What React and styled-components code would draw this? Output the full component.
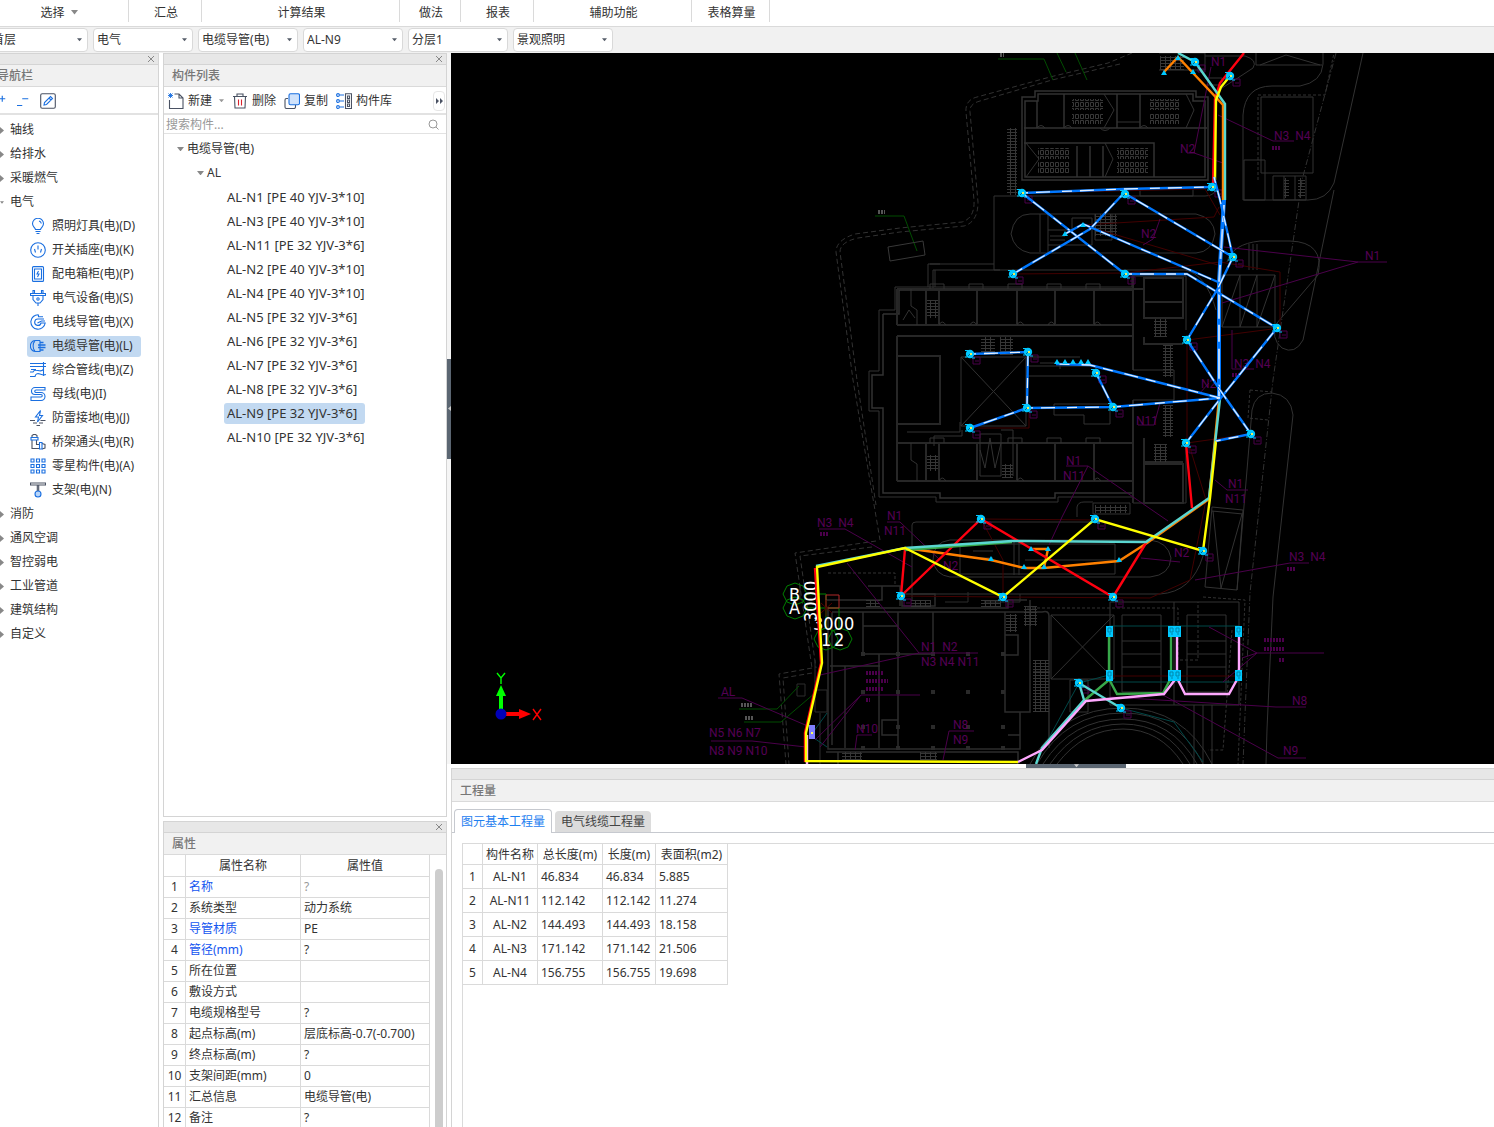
import { useState } from "react";
import styled, { createGlobalStyle, css } from "styled-components";

const GlobalStyle = createGlobalStyle`
  * {
    box-sizing: border-box;
  }

  body {
    margin: 0;
    background: #fff;
    overflow: hidden;
  }

  body, button, input, select, table {
    font-family: "Noto Sans", "Noto Sans CJK SC", sans-serif;
    font-size: 12px;
    line-height: 16px;
    color: #333;
  }

  button {
    background: none;
    border: none;
    padding: 0;
    cursor: pointer;
  }

  svg {
    display: block;
    flex: none;
  }
`;

/* The window is scrolled a little to the right of its left edge */
const Janela = styled.div`
  display: flex;
  flex-direction: column;
  height: 100vh;
  margin-left: -12px;
`;

const Menu = styled.nav`
  display: flex;
  height: 27px;
  padding-bottom: 4px;
  border-bottom: 1px solid #dadada;
`;

const MenuBotao = styled.button`
  display: flex;
  align-items: center;
  justify-content: center;
  gap: 6px;
  width: ${({ $largura }) => $largura}px;
  padding: 3px 0 0 2px;
  border-right: 1px solid #dadada;
`;

const Filtros = styled.div`
  display: flex;
  gap: 5px;
  padding: 1px 0;
  height: 26px;
  background: #f1f1f1;
`;

const Filtro = styled.label`
  position: relative;
  width: 100px;

  svg {
    position: absolute;
    right: 6px;
    top: 10px;
    pointer-events: none;
  }
`;

const Selecao = styled.select`
  appearance: none;
  width: 100%;
  height: 24px;
  padding: 0 14px 0 3px;
  background: #fff;
  border: 1px solid #d9d9d9;
  border-radius: 4px;
`;

const Corpo = styled.main`
  display: grid;
  grid-template-columns: 171px 284px minmax(0, 1fr);
  column-gap: 4px;
  flex: 1;
  min-height: 0;
`;

const Coluna = styled.div`
  display: flex;
  flex-direction: column;
  gap: 4px;
  min-height: 0;
`;

const Painel = styled.section`
  display: flex;
  flex-direction: column;
  flex: ${({ $altura }) => ($altura ? `0 0 ${$altura}px` : "1")};
  min-height: 0;
  min-width: 0;
  overflow: hidden;
  border: 1px solid #d4d4d4;
  border-bottom-width: ${({ $aberto }) => ($aberto ? 0 : 1)}px;
  border-right-width: ${({ $semDireita }) => ($semDireita ? 0 : 1)}px;
`;

const Alca = styled.div`
  display: flex;
  justify-content: flex-end;
  flex: none;
  height: 11px;
  padding-right: 3px;
  background: #e7e7e7;
  border-bottom: 1px solid #d4d4d4;

  button {
    display: flex;
    align-items: center;
  }
`;

const Titulo = styled.h2`
  flex: none;
  height: 22px;
  margin: 0;
  padding: 3px 8px;
  font-size: 12px;
  font-weight: 500;
  color: #777;
  background: #f1f1f1;
  border-bottom: 1px solid #dadada;
`;

const Barra = styled.div`
  display: flex;
  align-items: center;
  flex: none;
  gap: ${({ $espaco }) => $espaco}px;
  height: 28px;
  padding: 1px 0 0 ${({ $recuo }) => $recuo}px;
  border-bottom: 2px solid #e2e2e2;
`;

const BotaoBarra = styled.button`
  display: flex;
  align-items: center;
  gap: 4px;
  white-space: nowrap;

  svg:last-child:not(:first-child) {
    margin-left: 3px;
  }
`;

const BotaoMais = styled.button`
  display: flex;
  align-items: center;
  justify-content: center;
  width: 12px;
  height: 20px;
  margin-left: auto;
  margin-right: 1px;
  border: 1px solid #e6e6e6;
  border-radius: 4px;
`;

const Busca = styled.label`
  display: flex;
  align-items: center;
  flex: none;
  height: 19px;
  padding: 1px 7px 0 2px;
  border-bottom: 1px solid #e2e2e2;

  input {
    flex: 1;
    min-width: 0;
    padding: 0;
    border: none;
    outline: none;
  }

  input::placeholder {
    color: #999;
  }
`;

const Lista = styled.ul`
  list-style: none;
  margin: 0;
  padding: ${({ $topo = 0 }) => $topo}px 0 0;
`;

const Linha = styled.li`
  display: flex;
  align-items: center;
  height: 24px;
  padding-left: ${({ $recuo }) => $recuo}px;
`;

const LinhaBotao = styled.button`
  display: flex;
  align-items: center;
  gap: ${({ $espaco = 6 }) => $espaco}px;
  height: 21px;
  padding: 0 ${({ $direita = 3 }) => $direita}px 0 3px;
  border-radius: 3px;
  white-space: nowrap;

  ${({ $ativo }) =>
    $ativo &&
    css`
      background: #c2d9f1;
    `}
`;

const ComponenteBotao = styled(LinhaBotao)`
  font-size: 13px;
`;

const AreaPropriedades = styled.div`
  display: flex;
  justify-content: space-between;
  min-height: 0;
`;

const Tabela = styled.table`
  border-collapse: collapse;
  table-layout: fixed;
  width: ${({ $largura }) => $largura}px;

  th,
  td {
    height: ${({ $linha }) => $linha}px;
    padding: 0 3px;
    border: 1px solid #dadada;
    font-weight: 400;
    text-align: left;
    white-space: nowrap;
  }

  thead th {
    height: 21px;
    padding: 2px 0 0;
    text-align: center;
  }

  tr > :first-child {
    padding: 0;
    text-align: center;
  }
`;

const TabelaPropriedades = styled(Tabela)`
  margin-left: -1px;

  thead th {
    border-top: none;
  }
`;

const TabelaQuantidades = styled(Tabela)`
  margin: -1px 0 0 -1px;

  tbody td:nth-child(2) {
    text-align: center;
  }
`;

const Valor = styled.td`
  color: ${({ $cor = "#333" }) => $cor};
`;

const Rolagem = styled.div`
  width: 8px;
  margin: 14px 3px 0 0;
  border-radius: 4px 4px 0 0;
  background: #cdcdcd;
`;

const Area = styled.div`
  display: grid;
  grid-template-columns: 4px minmax(0, 1fr);
  grid-template-rows: minmax(0, 1fr) 4px 359px;
  margin-left: -4px;
  min-height: 0;
`;

const Divisor = styled.div`
  display: flex;
  align-items: center;
  background: #f5f5f5;
`;

const DivisorBaixo = styled(Divisor)`
  grid-column: 2;
  padding-left: 575px;
  background: #fff;
`;

const Puxador = styled.button`
  display: flex;
  align-items: center;
  justify-content: center;
  width: ${({ $largura }) => $largura}px;
  height: ${({ $altura }) => $altura}px;
  background: #5b6672;
`;

const Tela = styled.svg`
  width: 100%;
  height: 100%;
  background: #000;

  text {
    font-family: "Liberation Sans Narrow", "Roboto", sans-serif;
    font-size: 12px;
    fill: #540054;
  }

  .cota {
    font-family: "DejaVu Sans Condensed", "DejaVu Sans", sans-serif;
    font-size: 18px;
    fill: #fff;
  }
`;

const PainelQuantidades = styled(Painel)`
  grid-column: 2;
`;

const Abas = styled.div`
  display: flex;
  align-items: flex-end;
  flex: none;
  gap: 3px;
  height: 31px;
  padding-left: 2px;
  border-bottom: 1px solid #c6c9cf;
`;

const Aba = styled.button`
  height: ${({ $ativa }) => ($ativa ? 24 : 21)}px;
  margin-bottom: ${({ $ativa }) => ($ativa ? -1 : 0)}px;
  padding: 0 6px;
  color: ${({ $ativa }) => ($ativa ? "#1e80f0" : "#444")};
  background: ${({ $ativa }) => ($ativa ? "#fff" : "#dcdcdc")};
  border: ${({ $ativa }) => ($ativa ? "1px solid #c6c9cf" : "none")};
  border-bottom: none;
  border-radius: 4px 4px 0 0;
`;

const Quadro = styled.div`
  flex: 1;
  margin: 10px 0 0 10px;
  border: 1px solid #dadada;
  border-width: 1px 0 0 1px;
`;

const Seta = ({ cor = "#555c68", l = 6 }) => (
  <svg width={l} height={l / 2 + 1} viewBox="0 0 8 5" aria-hidden="true">
    <path d="M0 0h8L4 5z" fill={cor} />
  </svg>
);

const SetaDireita = () => (
  <svg width="4" height="7" viewBox="0 0 4 7" aria-hidden="true">
    <path d="M0 0v7l4-3.5z" fill="#888" />
  </svg>
);

const AZUL = "#1a6fe0";
const ESCURO = "#4a5263";

const Icone = ({ tamanho = 16, children }) => (
  <svg
    width={tamanho}
    height={tamanho}
    viewBox="0 0 16 16"
    fill="none"
    stroke={AZUL}
    strokeWidth="1.1"
    aria-hidden="true"
  >
    {children}
  </svg>
);

const icones = {
  lampada: (
    <>
      <path d="M5.5 11.5C5 9.500 2.500 8.500 2.500 5.800a5.500 5.500 0 0 1 11 0c0 2.700-2.500 3.700-3 5.700zM5.500 13.500h5M6.500 15.500h3" />
      <path d="M9 3q2 .5 2.300 2.500" />
    </>
  ),
  tomada: (
    <>
      <circle cx="8" cy="8" r="7.300" />
      <path d="M8 3.500v4M4.500 7l1 3.500M11.500 7l-1 3.500" />
    </>
  ),
  quadro: (
    <>
      <rect x="2.500" y=".6" width="11" height="14.800" rx="1" />
      <path d="M4.500 3h7v10h-7z" />
      <path d="M8.500 5L7 8h2l-1.500 3" />
    </>
  ),
  plugue: (
    <>
      <path d="M.5 3.500h15v2H.5zM3 3.500v-3h1.500v3M11.500 3.500v-3H13v3M3 5.500v4l3 3.500h4l3-3.500v-4M8 13v3" />
      <circle cx="8" cy="9" r="1.200" />
    </>
  ),
  fio: (
    <path d="M8.500.8A7.200 7.200 0 1 0 15.200 9H11a3.200 3.200 0 1 1-3-4h6M8.500.8v2H13M7.500 9l4-2H15" />
  ),
  cabo: (
    <>
      <path d="M10 2.500H5a5 5 0 0 0-4.500 5.500A5 5 0 0 0 5 13.500h5V2.500M5 3C2.500 5 2.500 11 5 13" />
      <path d="M10 4.500h3.500M8 7h7.500M8 9.500h7.500M10 12h3.500" strokeWidth="1.500" />
    </>
  ),
  tubos: (
    <path d="M0 1.500h16M0 4.500h16M0 10h3q1-2.500 5-1.500t5-1M0 14.500h5q1-4 5-2.500t6 .5M13.500 0v14M1 7.500h5" />
  ),
  barra: (
    <path d="M15 1.500H5a3.500 3.500 0 0 0 0 7h6a1 1 0 0 1 0 2.500H1v3.500h10a4 4 0 0 0 0-8H6a1 1 0 0 1 0-2.500h9z" />
  ),
  raio: (
    <>
      <path d="M10.500.5L5.500 7h3l-1 5 5-6.500h-3z" />
      <path d="M0 10.500h5M10.500 10.500h5M3 13h4M9 13h4M6.500 15.500h3.500" stroke={ESCURO} />
    </>
  ),
  conexao: (
    <>
      <path d="M2 3.500V1.500L3.500.5h2L7 1.500v2M2 6v8.500h7M6.500 6v4.500h3M12 9.500l3 1v3.500l-3 1" stroke={ESCURO} />
      <path d="M1 3.500h7V6H1zM9.500 8.500H12V15H9.500z" />
    </>
  ),
  grade: (
    <path d="M1 1h3v3H1zM6.500 1h3v3h-3zM12 1h3v3h-3zM1 6.500h3v3H1zM6.500 6.500h3v3h-3zM12 6.500h3v3h-3zM1 12h3v3H1zM6.500 12h3v3h-3zM12 12h3v3h-3z" />
  ),
  suporte: (
    <>
      <path d="M.5 1h15v2H.5zM7.300 3v6M8.700 3v6" stroke={ESCURO} />
      <circle cx="8" cy="12" r="3" fill="#b9d6fa" />
    </>
  ),
  lapis: (
    <>
      <rect x=".7" y=".7" width="14.600" height="14.600" rx="1.500" stroke={ESCURO} />
      <path d="M4 12l.5-2.500 6-6 2 2-6 6zM9 5l2 2" />
    </>
  ),
  novo: (
    <>
      <path d="M6.500 1H11l4 4v10.500H1.500V7M11 1v4h4" stroke={ESCURO} />
      <path d="M.5.5l4 4M4.500.5l-4 4M2.500 0v5M0 2.500h5" strokeWidth=".9" />
    </>
  ),
  lixo: (
    <>
      <path d="M1 3.500h14M5 3.500V1h6v2.500M2.500 3.500l.5 11.500h10l.5-11.500" stroke={ESCURO} />
      <path d="M6.500 6.500v6M9.500 6.500v6" stroke="#d9232e" />
    </>
  ),
  copiar: (
    <>
      <path d="M4 5.500H2.500q-1.500 0-1.500 1.500v7q0 1.500 1.500 1.500h7.500q1.500 0 1.500-1.500v-2" stroke={ESCURO} />
      <rect x="5" y=".7" width="10.500" height="11" rx="1.500" fill="#cfe2fb" />
    </>
  ),
  biblioteca: (
    <>
      <path d="M9.500.7h6v14.800h-6zM11.500 3h2v2.500h-2zM11.500 7h2v2.500h-2zM11.500 11h2v2.500h-2z" stroke={ESCURO} />
      <path d="M3.500 2H8M3.500 8H8M3.500 14H8" />
      <circle cx="2" cy="2" r="1.400" />
      <circle cx="2" cy="8" r="1.400" />
      <circle cx="2" cy="14" r="1.400" />
    </>
  ),
};

const Fechar = () => (
  <button aria-label="关闭">
    <svg width="8" height="8" viewBox="0 0 8 8" stroke="#888" aria-hidden="true">
      <path d="M1 1l6 6M7 1L1 7" />
    </svg>
  </button>
);

const menus = [
  { nome: "选择", largura: 141, seta: true },
  { nome: "汇总", largura: 73 },
  { nome: "计算结果", largura: 198 },
  { nome: "做法", largura: 61 },
  { nome: "报表", largura: 73 },
  { nome: "辅助功能", largura: 158 },
  { nome: "表格算量", largura: 78 },
];

const filtros = [
  ["楼层", "首层"],
  ["专业", "电气"],
  ["构件类型", "电缆导管(电)"],
  ["构件", "AL-N9"],
  ["分层", "分层1"],
  ["系统", "景观照明"],
];

const eletrica = [
  ["照明灯具(电)(D)", "lampada"],
  ["开关插座(电)(K)", "tomada"],
  ["配电箱柜(电)(P)", "quadro"],
  ["电气设备(电)(S)", "plugue"],
  ["电线导管(电)(X)", "fio"],
  ["电缆导管(电)(L)", "cabo"],
  ["综合管线(电)(Z)", "tubos"],
  ["母线(电)(I)", "barra"],
  ["防雷接地(电)(J)", "raio"],
  ["桥架通头(电)(R)", "conexao"],
  ["零星构件(电)(A)", "grade"],
  ["支架(电)(N)", "suporte"],
];

const grupos = [
  { nome: "轴线" },
  { nome: "给排水" },
  { nome: "采暖燃气" },
  { nome: "电气", itens: eletrica },
  { nome: "消防" },
  { nome: "通风空调" },
  { nome: "智控弱电" },
  { nome: "工业管道" },
  { nome: "建筑结构" },
  { nome: "自定义" },
];

const componentes = [
  "AL-N1 [PE 40 YJV-3*10]",
  "AL-N3 [PE 40 YJV-3*10]",
  "AL-N11 [PE 32 YJV-3*6]",
  "AL-N2 [PE 40 YJV-3*10]",
  "AL-N4 [PE 40 YJV-3*10]",
  "AL-N5 [PE 32 YJV-3*6]",
  "AL-N6 [PE 32 YJV-3*6]",
  "AL-N7 [PE 32 YJV-3*6]",
  "AL-N8 [PE 32 YJV-3*6]",
  "AL-N9 [PE 32 YJV-3*6]",
  "AL-N10 [PE 32 YJV-3*6]",
];

const AZUL_TEXTO = "#1456f0";

const propriedades = [
  ["名称", "?", AZUL_TEXTO, "#999"],
  ["系统类型", "动力系统"],
  ["导管材质", "PE", AZUL_TEXTO],
  ["管径(mm)", "?", AZUL_TEXTO],
  ["所在位置", ""],
  ["敷设方式", ""],
  ["电缆规格型号", "?"],
  ["起点标高(m)", "层底标高-0.7(-0.700)"],
  ["终点标高(m)", "?"],
  ["支架间距(mm)", "0"],
  ["汇总信息", "电缆导管(电)"],
  ["备注", "?"],
];

const quantidades = [
  ["AL-N1", "46.834", "46.834", "5.885"],
  ["AL-N11", "112.142", "112.142", "11.274"],
  ["AL-N2", "144.493", "144.493", "18.158"],
  ["AL-N3", "171.142", "171.142", "21.506"],
  ["AL-N4", "156.755", "156.755", "19.698"],
];

/* ---- Site plan ---- */

const circuitos = [
  "M1022 193L1124 189L1212 187",
  "M1022 193L1125 274L1187 274L1277 328L1220 399L1186 443",
  "M1124 193L1090 229L1013 274",
  "M1124 193L1233 257L1217 290L1187 340L1220 390L1251 434L1216 441",
  "M1065 234L1083 224L1218 282",
  "M1214 177L1220 200L1233 257",
  "M970 354L1028 352L1027 408L970 428",
  "M1027 408L1113 407L1220 398L1090 365L1056 364",
  "M1096 373L1113 407",
];

const rotas = [
  ["#ff0010", "M1244 53L1220 83L1215 99L1213 187"],
  ["#ff8000", "M1164 72L1178 57L1223 105V200M1219 399L1209 499L1147 543L1119 561L1044 568H1024L991 560L905 548M1044 568L1048 549H1031"],
  ["#ff0010", "M1186 443L1192 508M1146 543L1113 597L981 519L901 596L905 549M815 568L821 663L805 733V762"],
  ["#38a84a", "M1109 632V679L1117 694L1163 693L1171 678V632M1110 679L1085 700M1171 632V679M905 550L1012 542"],
  ["#5ad6d0", "M1178 53L1195 62L1225 104V200M1220 399L1209 498L1146 542L1012 541L905 548L816 566M1036 764L1042 748L1084 700L1079 683L1121 708"],
  ["#ffa8ff", "M1018 762L1042 750L1086 701L1164 694L1177 677V632V678L1185 694H1229L1239 676V632M807 764V735"],
  ["#ffff00", "M1230 76L1221 87L1216 100L1215 180M1216 441L1210 498L1203 551L1095 519L1003 597L905 548L817 567L822 663L806 733V761L1018 762"],
];

const luminarias = [
  [1195, 62], [1230, 76], [1022, 193], [1125, 194], [1212, 187], [1013, 274], [1125, 274],
  [1233, 257], [1187, 340], [1277, 328], [1186, 443], [1251, 434], [970, 354], [1028, 352],
  [1027, 408], [970, 428], [1113, 407], [1096, 373], [981, 519], [1095, 519], [901, 596],
  [1003, 597], [1113, 597], [1203, 551], [1079, 683], [1121, 708],
];

const pontos = [
  [1164, 73], [1178, 58], [1193, 72], [1065, 234], [1083, 225], [1057, 362], [1065, 362],
  [1073, 362], [1081, 362], [1088, 362], [991, 559], [1024, 567], [1044, 567], [1119, 560],
  [1031, 549], [1048, 549],
];

const caixas = [
  [1109, 632], [1171, 632], [1177, 632], [1238, 632],
  [1109, 676], [1171, 676], [1177, 676], [1238, 676],
];

const chamadas = [
  ["N1", 1211, 66], ["N3  N4", 1274, 140], ["N2", 1180, 153], ["N2", 1141, 238], ["N1", 1365, 260],
  ["N3  N4", 1234, 368], ["N2", 1201, 388], ["N11", 1136, 425], ["N1", 1066, 465], ["N11", 1063, 480],
  ["N1", 1228, 488], ["N11", 1225, 503], ["N3  N4", 817, 527], ["N1", 887, 520], ["N11", 884, 535],
  ["N2", 1174, 557], ["N2", 943, 570], ["N3  N4", 1289, 561], ["N1  N2", 921, 651], ["N3 N4 N11", 921, 666],
  ["AL", 721, 696], ["N5 N6 N7", 709, 737], ["N8 N9 N10", 709, 755], ["N10", 856, 733],
  ["N8", 953, 729], ["N9", 953, 744], ["N8", 1292, 705], ["N9", 1283, 755],
];

const miudos = [
  [1272, 148, 8], [820, 534, 8], [1287, 569, 8], [1264, 640, 21], [1264, 649, 21],
  [1279, 660, 5], [866, 673, 18], [866, 681, 22], [866, 689, 18], [866, 700, 4], [1232, 375, 9],
];

const Predios = () => (
  <g fill="none" stroke="#323232">
    {/* curbs and roads */}
    <g strokeDasharray="5 3">
      <path d="M1132 53L1108 63L1050 77L977 97Q965 100 966 112L974 200Q975 218 962 222L900 228L855 234Q836 240 836 252L853 380L880 540" />
      <path d="M1120 64L1052 80L980 101Q969 104 970 112L978 202Q978 222 964 226L900 232L858 238Q840 242 840 252L857 380L876 505" />
      <path d="M876 541L795 553L812 668M872 547L800 556L816 668M812 668L779 674L786 764M812 673L783 678L789 764" />
      <path d="M1336 53L1302 180L1273 380L1250 593L1243 764" strokeDasharray="6 2 1 2" />
      <path d="M1258 180V95H1325L1334 53M1250 390L1248 418L1268 420M1250 390L1272 392M828 573H895V586M1027 608H1178V660H1198V602M1203 597L1245 600L1238 764M1232 630L1223 750H1208" strokeDasharray="3 2" />
    </g>
    <path d="M1363 53L1334 183Q1327 200 1308 200H1243V115Q1245 86 1272 86H1300Q1322 82 1323 64V53M1256 53V65H1322M1260 65L1286 55L1320 65" />
    <path d="M1334 190L1303 340Q1295 355 1282 348Q1270 338 1277 323L1318 275Q1325 242 1290 241H1260Q1232 244 1227 262" />
    <path d="M1237 590L1252 410Q1255 393 1272 393Q1291 395 1293 415L1273 597L1267 729L1266 764" />
    <path d="M994 196H1205Q1215 196 1216 188M994 196V270H1185Q1206 274 1216 310M930 264H994M935 270V287M1011 234Q1014 214 1030 214H1196Q1214 218 1215 234Q1212 252 1196 253H1030Q1014 250 1011 234z" />
    <path d="M912 600V525Q912 522 916 522H1100M933 560Q933 542 950 540H1150Q1168 542 1171 558Q1170 575 1150 577H950Q935 575 933 560zM913 594H1160Q1192 592 1203 556" />
    <path d="M1261 97H1313V173H1261zM1244 160H1265V200H1244zM1273 176H1306V200H1273zM1284 176V200M1295 176V200" />
    {/* north classrooms */}
    <path d="M1022 97H1035V91H1196V97H1208V180H1022zM1025 101H1038V94H1193V101H1205V177H1025zM1024 128H1207M1024 143H1154V177M1064 94V128M1117 94V128M1140 94V128M1077 146V177M1090 146V177M1103 146V177M1037 101V128" strokeWidth="1.500" />
    <path d="M1037 128q4 -5 8 0M1064 128q4 -5 8 0M1100 128q5 5 10 0M1140 128q4 -5 8 0M1026 143l13 16l-13 18M1105 143l8 16l-8 18M1104 94l10 16l-10 18M1186 94l8 16l-8 18M1117 122h23" />
    <path d="M1159 53H1205V70H1159M1205 78H1222V85H1205M1205 56H1245Q1258 60 1253 68Q1238 78 1222 88" />
    {/* garden strip */}
    <path d="M1040 214V252M1048 214V252M1048 230H1072V218H1092V245H1048M1095 214V240H1112V214M1050 236H1065M1050 240H1065M1140 189V196H1193V189" />
    {/* central building */}
    <path d="M879 310H895V287H1132V276H1186V330M879 310V371H869V411H879V497H936V502H1058V497H1133V503H1186V440M928 287V264H940M933 289V270H1000" />
    <path d="M883 314V375H872V408H883V493H940V498H1055V493H1133M883 314H899V290H1133" strokeWidth="1.500" />
    <g strokeWidth="2" stroke="#272727">
      <path d="M897 289H1143M897 325H1133M897 336H1133M897 443H1133M897 481H1133M897 289V325M926 289V325M939 289V325M977 289V325M1017 289V325M1055 289V325M1094 289V325M1133 276V370M1133 400V503M897 443V481M926 443V481M939 443V481M977 443V481M1017 443V481M1055 443V481M1094 443V481M897 336V443M1144 278H1183V318H1144zM1144 302H1183M1144 337V344H1183M1144 438V462H1183M1144 464H1183V503H1144z" />
      <path d="M897 356H940V424H897" />
    </g>
    <path d="M961 357H1026V426H961zM961 357L1026 426M1026 357L961 426M1026 357H1080M1026 366H1096V376H1026M1040 363H1060V369M1054 404H1110V424H1084V415H1054zM1133 370H1174V400H1133M907 432H960V422M934 446V436H962V430M980 434H1001V476H980zM1001 430H1013V476M980 450l5 18l5 -30l5 30l6 -25" />
    <path d="M930 289v-5h14v5M969 289v-5h14v5M1008 289v-5h14v5M1047 289v-5h14v5M1086 289v-5h14v5M930 443v-5h14v5M1008 443v-5h14v5M1047 443v-5h14v5M1086 443v-5h14v5" />
    <path d="M939 325q3 -6 7 0M970 325q3 -6 7 0M1017 325q3 -6 7 0M1048 325q3 -6 7 0M1094 325q3 -6 7 0M939 481q3 -6 7 0M1017 481q3 -6 7 0M1094 481q3 -6 7 0M911 289V306L917 310V325M903 320l6 -10l6 8M911 443V460L917 464V481" />
    {/* parking bays */}
    <path d="M1222 275H1275V327H1222zM1222 327L1240 275M1240 327L1257 275M1257 327L1275 275M1240 275V327M1257 275V327M1212 507L1243 510L1237 590L1205 587zM1212 511L1243 514M1213 511L1221 588L1242 514" />
    <path d="M1249 244v26M1253 244v26M1257 244v26" />
    {/* gymnasium */}
    <g stroke="#2c2c2c">
      <path d="M826 608H1008V600H1027M828 608V749H1020V712H1030V600M832 612H1005M832 612V745M1005 612V710M863 612V654M898 612V748M863 654H898M863 626H898M845 666V748M879 654V748M830 666H880M933 612V654H898M1005 612H1042Q1049 610 1049 616V748M1005 635H1018V655H1005M1005 655V712H1020M1008 735H1020M826 752H1018V764M838 752V764M1033 672H1050M898 720H882V735H898M882 586V600H826M868 586H900V606M902 594H935V606H902z" strokeWidth="1.500" />
      <path d="M945 602H968V592M984 602H1020V594" />
      <path d="M800 585V600M815 690H827V712H815zM797 684h8v12h-8zM815 660V690M820 713V764" />
    </g>
    <g fill="#2a2a2a" stroke="none">
      {[863, 898, 933, 968, 1003].map((x) =>
        [654, 692, 727, 748].map((y) => (
          <rect key={`${x}-${y}`} x={x - 2} y={y - 2} width="4" height="4" />
        ))
      )}
    </g>
    {/* courts and track */}
    <path d="M1051 615H1114V679H1051zM1051 615L1114 679M1114 615L1051 679M1110 602H1239V705H1110zM1122 615H1161V692H1122zM1187 615H1226V692H1187zM1122 641H1161M1122 654H1161M1122 667H1161M1187 641H1226M1187 654H1226M1187 667H1226M1174 602V705M1070 680H1088V712H1070z" />
    <path d="M1194 705V764M1203 705V764M1212 705V764M1030 764Q1060 708 1123 708Q1184 708 1212 764M1037 764Q1066 713 1123 713Q1178 713 1203 764M1043 764Q1072 719 1123 719Q1172 719 1197 764M1050 764Q1078 724 1123 724Q1166 724 1190 764M1057 764Q1084 729 1123 729Q1160 729 1183 764" />
    <path d="M1077 517V507Q1078 502 1084 502H1093M1093 503H1130V514H1093zM960 544H1115V574H960zM1019 541V575M1014 541V575M973 551H993M973 558H993M1025 560H1115" />
    {/* stairs and seating */}
    <g stroke="none" fill="url(#escada)">
      <rect x="1007" y="128" width="10" height="67" />
      <rect x="927" y="300" width="11" height="18" />
      <rect x="981" y="337" width="14" height="18" />
      <rect x="1000" y="337" width="13" height="18" />
      <rect x="927" y="455" width="11" height="16" />
      <rect x="1002" y="464" width="11" height="14" />
      <rect x="1154" y="319" width="13" height="18" />
      <rect x="1163" y="345" width="10" height="32" />
      <rect x="1163" y="405" width="10" height="32" />
      <rect x="1154" y="444" width="13" height="18" />
      <rect x="1095" y="505" width="32" height="8" />
      <rect x="866" y="600" width="14" height="7" />
      <rect x="911" y="600" width="20" height="7" />
      <rect x="981" y="600" width="20" height="7" />
      <rect x="1006" y="614" width="11" height="18" />
      <rect x="1024" y="606" width="13" height="20" />
      <rect x="1033" y="660" width="16" height="52" />
      <rect x="842" y="752" width="20" height="8" />
      <rect x="920" y="752" width="17" height="8" />
      <rect x="1095" y="214" width="22" height="22" />
      <rect x="1284" y="178" width="5" height="20" />
      <rect x="1298" y="178" width="7" height="20" />
      <rect x="1160" y="56" width="24" height="14" />
    </g>
    <g stroke="none" fill="url(#cadeiras)">
      <rect x="1072" y="99" width="31" height="11" />
      <rect x="1072" y="113" width="31" height="11" />
      <rect x="1149" y="99" width="31" height="11" />
      <rect x="1149" y="113" width="31" height="11" />
      <rect x="1038" y="148" width="31" height="11" />
      <rect x="1038" y="162" width="31" height="11" />
      <rect x="1117" y="148" width="31" height="11" />
      <rect x="1117" y="162" width="31" height="11" />
    </g>
  </g>
);

const Planta = () => (
  <Tela viewBox="451 53 1043 711" preserveAspectRatio="xMinYMin slice" role="img" aria-label="平面图">
    <defs>
      <pattern id="escada" width="5" height="3" patternUnits="userSpaceOnUse">
        <path d="M0 .5h5M.5 0v3" stroke="#363636" />
      </pattern>
      <pattern id="cadeiras" width="5" height="6" patternUnits="userSpaceOnUse">
        <path d="M.5 .5h3v4h-3z" fill="none" stroke="#383838" />
      </pattern>
    </defs>

    <Predios />

    <g fill="none" stroke="#420000">
      <path d="M1022 193L1205 189L1220 215M1083 225L1214 217L1219 207M1083 225L1218 265M1013 274L1125 273L1220 262L1280 272V328L1187 340V443L1251 434M970 428H1029V408M981 519L1095 520M981 519L1003 560V597L901 596M1003 597L1150 598L1190 580L1206 500L1190 448M1109 676H1238" />
    </g>
    <g fill="none" stroke="#004848">
      <path d="M1109 626H1239M1109 682H1239M1079 683L1045 745M1079 683L1109 675M1121 708L1174 722L1203 762M814 731L827 713M814 738L827 747" />
    </g>
    <g fill="none" stroke="#004d00">
      <path d="M998 59H1044L1053 80M1057 53L1066 72M1075 53L1087 80M875 216H904L917 251M739 709H777L799 686M744 722H781L815 693" />
    </g>
    <path d="M888 247L923 241L925 255L890 261z" fill="none" stroke="#383838" />

    <g fill="none" stroke="#4b004b">
      <path d="M1211 67L1194 153H1187M1194 153L1223 163M1218 115L1273 141H1294M1160 219L1153 239L1143 245M1387 262H1358L1224 247M1358 262L1222 303M1232 330V369H1254M1209 383L1199 394M1160 403L1154 425H1138M1066 466H1088L1062 517L1049 545M1088 466L1168 521M1215 480L1227 490H1248" />
      <path d="M819 529H845L912 567M887 522H900L940 560M1141 558L1180 562M1195 580L1290 563H1309M847 563L919 653H978M919 653L820 675M718 698H742L810 727M711 741H752L806 747M815 740L861 695H920M861 695L820 747M855 750L857 735H872M943 760L949 731H974M1110 697L1276 707H1306M1163 695L1278 758H1306M1209 627L1257 653H1324M1257 653L1223 682M1257 653L1242 658" />
      {luminarias.map(([x, y]) => (
        <path key={`${x}-${y}`} d={`M${x + 3} ${y + 3}h7v7h-7zM${x + 5} ${y + 7}h4`} />
      ))}
    </g>
    {chamadas.map(([texto, x, y]) => (
      <text key={`${x}-${y}`} x={x} y={y} xmlSpace="preserve">
        {texto}
      </text>
    ))}
    {miudos.map(([x, y, l]) => (
      <path
        key={`${x}-${y}`}
        d={`M${x} ${y}h${l}`}
        stroke="#4b004b"
        strokeWidth="4"
        strokeDasharray="2 1"
      />
    ))}
    <path d="M878 212h7M741 705h12M745 718h8M1000 55h4" stroke="#555" strokeWidth="4" strokeDasharray="2 1" />

    {/* axis grid bubbles */}
    <g fill="none" stroke="#008000">
      <path d="M795 583l8 3l4 8l-4 8l-8 3l-8 -3l-4 -8l4 -8zM795 597l8 3l4 8l-4 8l-8 3l-8 -3l-4 -8l4 -8zM826 628l8 3l4 8l-4 8l-8 3l-8 -3l-4 -8l4 -8zM840 628l8 3l4 8l-4 8l-8 3l-8 -3l-4 -8l4 -8z" />
      <path d="M807 594H826V628M807 608H839V628" />
    </g>
    <path d="M826 595h13v13h-13z" fill="none" stroke="#b02828" />
    <path d="M821 603l11 10M832 603l-11 10M826 600v16" stroke="#500000" />
    <text className="cota" x="789" y="601">B</text>
    <text className="cota" x="789" y="614">A</text>
    <text className="cota" x="813" y="630">3000</text>
    <text className="cota" x="821" y="646">1</text>
    <text className="cota" x="834" y="646">2</text>
    <text className="cota" transform="translate(817 622) rotate(-90)">3000</text>

    <g fill="none" strokeWidth="2.400">
      {rotas.map(([cor, d]) => (
        <path key={d} d={d} stroke={cor} />
      ))}
    </g>
    <path d="M1224 200L1219 282V399" fill="none" stroke="#0078ff" strokeWidth="4" />
    <path d="M1224 205L1219 282V399" fill="none" stroke="#b8d8ff" strokeWidth="2" strokeDasharray="17 7 30 6" />
    {circuitos.map((d) => (
      <g key={d} fill="none">
        <path d={d} stroke="#0078ff" strokeWidth="2.400" />
        <path d={d} stroke="#e4f0ff" strokeWidth="1.300" strokeDasharray="10 8 14 12" strokeDashoffset="4" />
      </g>
    ))}

    {luminarias.map(([x, y]) => (
      <g key={`${x}-${y}`}>
        <circle cx={x} cy={y} r="4.200" fill="#00c8ff" />
        <path d={`M${x - 5} ${y - 3.5}h3M${x + 2} ${y + 4}h3M${x - 5} ${y + 3}h2`} stroke="#00c8ff" />
        <path d={`M${x - 2} ${y + 2}l2 -2`} stroke="#066d88" />
        <path d={`M${x} ${y - 1}h2v2h-2z`} fill="#e8f060" />
      </g>
    ))}
    {pontos.map(([x, y]) => (
      <path key={`${x}-${y}`} d={`M${x - 3} ${y + 2}h6l-3 -5z`} fill="#00c8ff" />
    ))}
    {caixas.map(([x, y]) => (
      <g key={`${x}-${y}`}>
        <rect x={x - 3} y={y - 6} width="7" height="11" fill="#00c8ff" />
        <path d={`M${x - 1} ${y - 4}h3v4h-3zM${x} ${y + 2}h2`} fill="none" stroke="#0087ab" />
      </g>
    ))}
    <rect x="809" y="725" width="6" height="14" fill="#8080ff" />
    <path d="M811 732h2v2h-2z" fill="#ffff60" />

    {/* coordinate axes */}
    <path d="M501 714V696" stroke="#00ff00" strokeWidth="4" />
    <path d="M496 696h10l-5 -11z" fill="#00ff00" />
    <path d="M501 714H520" stroke="#ff0000" strokeWidth="4" />
    <path d="M519 709v10l12 -5z" fill="#ff0000" />
    <circle cx="501" cy="714" r="5.500" fill="#0000b8" />
    <path d="M497 673l4 5l4 -5M501 678v6" fill="none" stroke="#00ff00" strokeWidth="1.400" />
    <path d="M533 709l8 11M541 709l-8 11" stroke="#ff0000" strokeWidth="1.400" />
  </Tela>
);

const Navegacao = () => {
  const [ativo, setAtivo] = useState("电缆导管(电)(L)");

  return (
    <Painel $aberto>
      <Alca>
        <Fechar />
      </Alca>
      <Titulo>导航栏</Titulo>
      <Barra $recuo={5} $espaco={11}>
        <button aria-label="展开">
          <Icone tamanho={12}>
            <path d="M0 14h6M11 1v8M7 5h8" strokeWidth="1.500" />
          </Icone>
        </button>
        <button aria-label="折叠">
          <Icone tamanho={12}>
            <path d="M0 14h7M7 5h8" strokeWidth="1.500" />
          </Icone>
        </button>
        <button aria-label="编辑">
          <Icone>{icones.lapis}</Icone>
        </button>
      </Barra>
      <Lista $topo={3}>
        {grupos.map(({ nome, itens }) => (
          <li key={nome}>
            <Linha as="div" $recuo={8}>
              <LinhaBotao>
                {itens ? <Seta cor="#888" l={4} /> : <SetaDireita />}
                {nome}
              </LinhaBotao>
            </Linha>
            {itens && (
              <Lista>
                {itens.map(([item, icone]) => (
                  <Linha key={item} $recuo={38}>
                    <LinhaBotao
                      $direita={8}
                      $ativo={item === ativo}
                      onClick={() => setAtivo(item)}
                    >
                      <Icone>{icones[icone]}</Icone>
                      {item}
                    </LinhaBotao>
                  </Linha>
                ))}
              </Lista>
            )}
          </li>
        ))}
      </Lista>
    </Painel>
  );
};

const ListaComponentes = () => {
  const [ativo, setAtivo] = useState("AL-N9 [PE 32 YJV-3*6]");

  return (
    <Painel>
      <Alca>
        <Fechar />
      </Alca>
      <Titulo>构件列表</Titulo>
      <Barra $recuo={4} $espaco={8}>
        <BotaoBarra>
          <Icone>{icones.novo}</Icone>
          新建
          <Seta cor="#999" l={5} />
        </BotaoBarra>
        <BotaoBarra>
          <Icone>{icones.lixo}</Icone>
          <span>删除</span>
        </BotaoBarra>
        <BotaoBarra>
          <Icone>{icones.copiar}</Icone>
          <span>复制</span>
        </BotaoBarra>
        <BotaoBarra>
          <Icone>{icones.biblioteca}</Icone>
          <span>构件库</span>
        </BotaoBarra>
        <BotaoMais aria-label="更多">
          <svg width="7" height="6" viewBox="0 0 7 6" fill={ESCURO} aria-hidden="true">
            <path d="M0 0v6l3-3zM4 0v6l3-3z" />
          </svg>
        </BotaoMais>
      </Barra>
      <Busca>
        <input placeholder="搜索构件..." aria-label="搜索构件" />
        <svg width="11" height="11" viewBox="0 0 11 11" fill="none" stroke="#999" aria-hidden="true">
          <circle cx="5" cy="5" r="4" />
          <path d="M8 8l2.500 2.500" />
        </svg>
      </Busca>
      <Lista $topo={3}>
        <Linha $recuo={10}>
          <LinhaBotao $espaco={3}>
            <Seta cor="#888" l={7} />
            电缆导管(电)
          </LinhaBotao>
        </Linha>
        <Linha $recuo={30}>
          <LinhaBotao $espaco={3}>
            <Seta cor="#888" l={7} />
            AL
          </LinhaBotao>
        </Linha>
        {componentes.map((nome) => (
          <Linha key={nome} $recuo={60}>
            <ComponenteBotao $direita={8} $ativo={nome === ativo} onClick={() => setAtivo(nome)}>
              {nome}
            </ComponenteBotao>
          </Linha>
        ))}
      </Lista>
    </Painel>
  );
};

const Propriedades = () => (
  <Painel $altura={306} $aberto>
    <Alca>
      <Fechar />
    </Alca>
    <Titulo>属性</Titulo>
    <AreaPropriedades>
      <TabelaPropriedades $largura={267} $linha={21}>
        <colgroup>
          <col width="22" />
          <col width="115" />
          <col width="129" />
        </colgroup>
        <thead>
          <tr>
            <th />
            <th>属性名称</th>
            <th>属性值</th>
          </tr>
        </thead>
        <tbody>
          {propriedades.map(([nome, valor, corNome, corValor], i) => (
            <tr key={nome}>
              <td>{i + 1}</td>
              <Valor $cor={corNome}>{nome}</Valor>
              <Valor $cor={corValor}>{valor}</Valor>
            </tr>
          ))}
        </tbody>
      </TabelaPropriedades>
      <Rolagem />
    </AreaPropriedades>
  </Painel>
);

const Quantidades = () => {
  const [aba, setAba] = useState("图元基本工程量");

  return (
    <PainelQuantidades $aberto $semDireita>
      <Alca />
      <Titulo>工程量</Titulo>
      <Abas role="tablist">
        {["图元基本工程量", "电气线缆工程量"].map((nome) => (
          <Aba
            key={nome}
            role="tab"
            aria-selected={aba === nome}
            $ativa={aba === nome}
            onClick={() => setAba(nome)}
          >
            {nome}
          </Aba>
        ))}
      </Abas>
      <Quadro>
        <TabelaQuantidades $largura={266} $linha={24}>
          <colgroup>
            <col width="20" />
            <col width="55" />
            <col width="65" />
            <col width="53" />
            <col width="72" />
          </colgroup>
          <thead>
            <tr>
              <th />
              <th>构件名称</th>
              <th>总长度(m)</th>
              <th>长度(m)</th>
              <th>表面积(m2)</th>
            </tr>
          </thead>
          <tbody>
            {quantidades.map((linha, i) => (
              <tr key={linha[0]}>
                <td>{i + 1}</td>
                {linha.map((valor, j) => (
                  <td key={j}>{valor}</td>
                ))}
              </tr>
            ))}
          </tbody>
        </TabelaQuantidades>
      </Quadro>
    </PainelQuantidades>
  );
};

const App = () => {
  return (
    <>
      <GlobalStyle />
      <Janela>
        <Menu>
          {menus.map(({ nome, largura, seta }) => (
            <MenuBotao key={nome} $largura={largura}>
              {nome}
              {seta && <Seta cor="#888" l={7} />}
            </MenuBotao>
          ))}
        </Menu>
        <Filtros>
          {filtros.map(([rotulo, valor]) => (
            <Filtro key={rotulo}>
              <Selecao aria-label={rotulo}>
                <option>{valor}</option>
              </Selecao>
              <Seta l={5} />
            </Filtro>
          ))}
        </Filtros>
        <Corpo>
          <Navegacao />
          <Coluna>
            <ListaComponentes />
            <Propriedades />
          </Coluna>
          <Area>
            <Divisor>
              <Puxador $largura={4} $altura={100} aria-label="收起左侧">
                <svg width="3" height="5" viewBox="0 0 3 5" fill="#ccc" aria-hidden="true">
                  <path d="M3 0v5L0 2.500z" />
                </svg>
              </Puxador>
            </Divisor>
            <Planta />
            <DivisorBaixo>
              <Puxador $largura={100} $altura={4} aria-label="收起底部">
                <Seta cor="#ccc" l={5} />
              </Puxador>
            </DivisorBaixo>
            <Quantidades />
          </Area>
        </Corpo>
      </Janela>
    </>
  );
};

export default App;
